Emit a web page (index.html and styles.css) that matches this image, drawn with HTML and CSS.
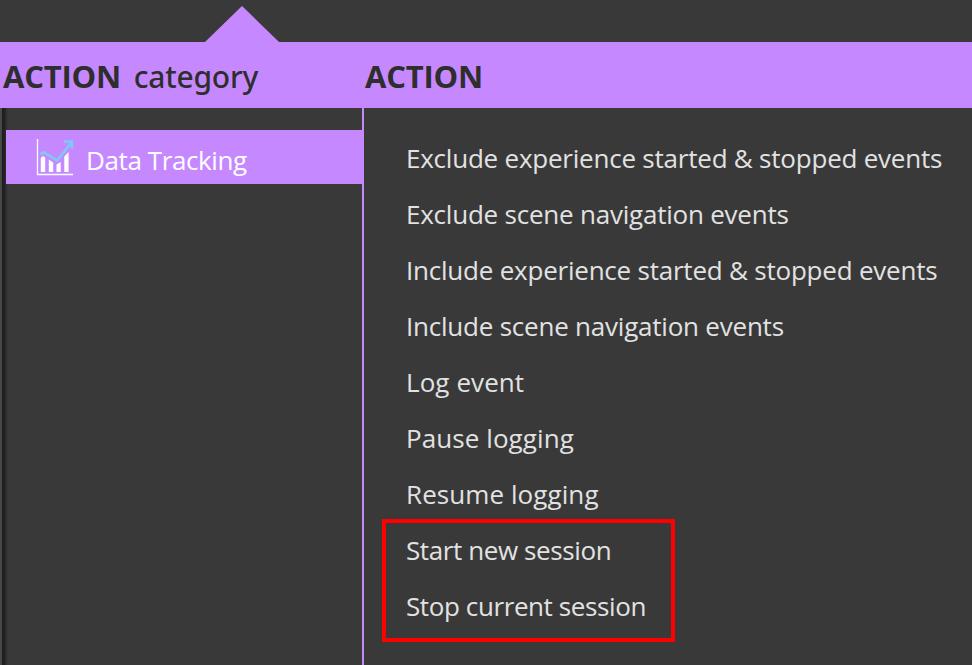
FILE: index.html
```html
<!DOCTYPE html>
<html lang="en">
<head>
  <meta charset="UTF-8">
  <meta name="viewport" content="width=device-width, initial-scale=1.0">
  <title>Actions</title>
  <link rel="stylesheet" href="styles.css">
</head>
<body>
  <div class="pointer"></div>
  <header class="header">
    <h2 class="header-category"><b>ACTION</b> <span>category</span></h2>
    <h2 class="header-action"><b>ACTION</b></h2>
  </header>

  <main class="panel">
    <nav class="categories">
      <a class="category">
        <svg class="chart-icon" width="38" height="38" viewBox="0 0 38 38">
          <path d="M1.500 1V36.500H37" fill="none" stroke="#fff" stroke-width="1.300"/>
          <path d="M4.800 20l2.200-2 2.200 1.500V34H4.800zM12.800 21.500l4.400 3V34h-4.400zM20.500 26.500l4.200-2.500v10h-4.200zM28.300 18.500l4.300-4.500v20h-4.300z" fill="#fff"/>
          <path d="M4.500 16.500L7.500 14l13.500 8.500L35.500 4.500" fill="none" stroke="#7dcbf2" stroke-width="2.600"/>
          <path d="M28 3.500H36V11" fill="none" stroke="#7dcbf2" stroke-width="2.400"/>
        </svg>
        <span>Data Tracking</span>
      </a>
    </nav>

    <ul class="actions">
      <li>Exclude experience started &amp; stopped events</li>
      <li>Exclude scene navigation events</li>
      <li>Include experience started &amp; stopped events</li>
      <li>Include scene navigation events</li>
      <li class="log">Log event</li>
      <li class="log">Pause logging</li>
      <li class="log">Resume logging</li>
      <li class="session">
        <ul class="session-list">
          <li>Start new session</li>
          <li>Stop current session</li>
        </ul>
      </li>
    </ul>
  </main>
</body>
</html>
```
FILE: styles.css
```css
* {
  margin: 0;
  padding: 0;
  box-sizing: border-box;
}

body {
  height: 100vh;
  display: flex;
  flex-direction: column;
  overflow: hidden;
  background: #393939;
  color: #e2e2e2;
  font-family: "Segoe UI", "Open Sans", "Noto Sans", sans-serif;
  font-size: 26px;
  letter-spacing: -0.22px;
}

/* Triangle above the header */
.pointer {
  width: 74px;
  height: 36px;
  margin: 6px 0 0 205px;
  flex-shrink: 0;
  background: #c688ff;
  clip-path: polygon(50% 0, 100% 100%, 0 100%);
}

.header {
  display: flex;
  height: 66px;
  flex-shrink: 0;
  background: #c688ff;
  color: #2e2e2e;
}

.header h2 {
  padding-top: 1px;
  font-size: 31px;
  font-weight: 400;
  line-height: 66px;
  white-space: nowrap;
}

.header b {
  font-weight: 700;
}

.header-category {
  width: 362px;
  padding-left: 3px;
}

.header-category span {
  margin-left: 5px;
  font-family: "Segoe UI", "Noto Sans", sans-serif;
  font-size: 30px;
  font-weight: 500;
}

.header-action {
  padding-left: 3px;
}

.panel {
  display: flex;
  flex: 1;
}

.categories {
  width: 364px;
  padding: 22px 0 0 6px;
  border-right: 2px solid #c688ff;
  background: linear-gradient(to right, #484848 2px, #1c1c1c 2px, #232323 5px, #303030 6px, #393939 9px);
}

.category {
  display: flex;
  align-items: center;
  height: 54px;
  padding-left: 30px;
  background: #c688ff;
  color: #fff;
  letter-spacing: -0.4px;
}

.category span {
  margin: 5px 0 0 12px;
}

.actions {
  padding: 22px 0 0 42px;
  list-style: none;
  line-height: 56px;
  white-space: nowrap;
}

.log {
  letter-spacing: 0.08px;
}

/* Outlined group of the session actions */
.session {
  width: 293px;
  height: 123px;
  margin: -3px 0 0 -24px;
  padding-left: 20px;
  border: 4px solid #f00;
  letter-spacing: -0.4px;
}

.session-list {
  margin-top: -1px;
  list-style: none;
}
```
